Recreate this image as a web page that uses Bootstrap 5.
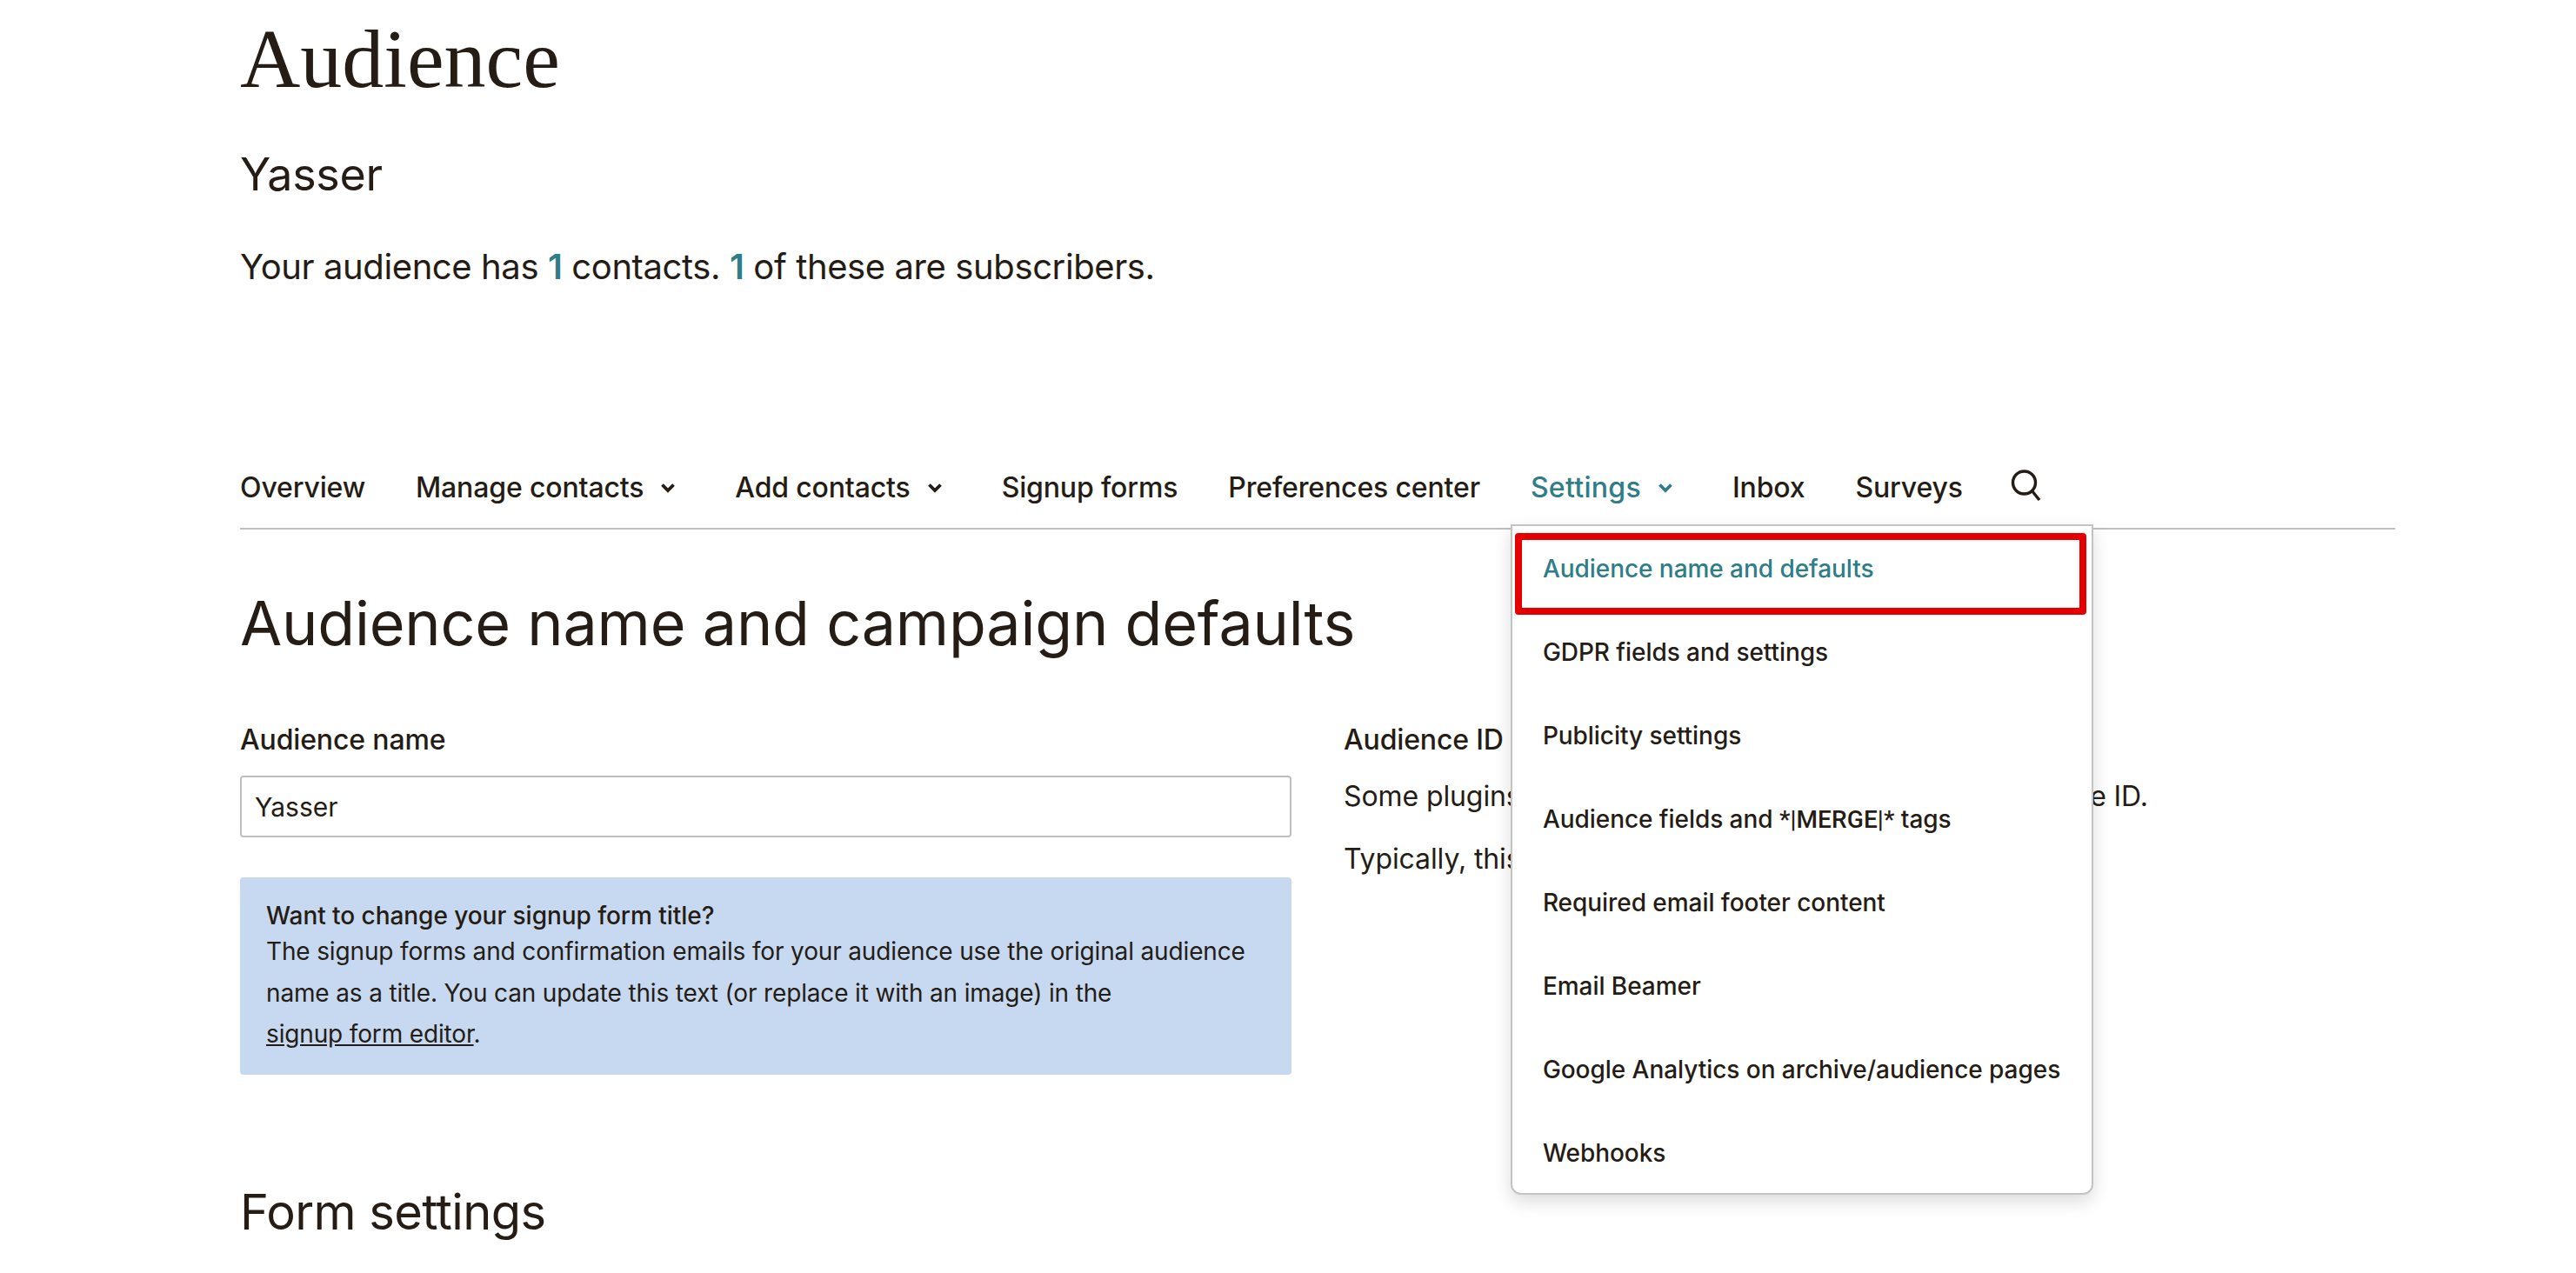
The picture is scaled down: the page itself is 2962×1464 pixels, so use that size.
<!DOCTYPE html>
<html lang="en">
<head>
<meta charset="utf-8">
<title>Audience</title>
<link href="https://cdn.jsdelivr.net/npm/bootstrap@5.3.0/dist/css/bootstrap.min.css" rel="stylesheet">
<style>
html,body{height:1464px;overflow:hidden}
body{font-family:Inter,"Liberation Sans",sans-serif;color:#241c15;background:#fff;font-size:32px}
.page-wrap{padding:0 208px 0 276px}
.aud-title{font-family:"Liberation Serif",serif;font-size:96px;line-height:1;font-weight:400;margin:20px 0 0;height:96px}
.aud-name{font-size:52px;line-height:60px;font-weight:400;margin:55px 0 0;letter-spacing:-.3px}
.aud-summary{font-size:40px;line-height:50px;font-weight:400;margin:51px 0 0;letter-spacing:-.4px}
.teal-num{color:#2e7d88;font-weight:600}
.tabbar{margin-top:208px;height:69px;padding-top:2px;border-bottom:2px solid #bfbfbf;gap:58px;align-items:flex-start;font-weight:500;font-size:32px;line-height:38px;letter-spacing:-.15px}
.tab-link{color:#241c15;text-decoration:none;display:flex;align-items:center;gap:19px}
.tab-link.on{color:#2e7d88;letter-spacing:.3px}
.tab-wrap{position:relative}
.chev{width:18px;height:12px;margin-right:10px;fill:none;stroke:currentColor;stroke-width:3.8}
.lens-link{margin:-2px 0 0 -3px}
.lens{width:36px;height:36px;fill:none;stroke:#241c15;stroke-width:3.4}
.settings-menu{display:block;position:absolute;top:61px;left:-23px;width:670px;height:771px;padding:8px 3px;margin:0;border:2px solid #c4c4c4;border-radius:0 0 12px 12px;box-shadow:0 8px 20px rgba(0,0,0,.14);z-index:5;font-size:28px;letter-spacing:-.05px}
.settings-menu .dropdown-item{padding:23px 0 0 32px;height:96px;line-height:40px;color:#241c15;font-weight:500;white-space:nowrap;background:none}
.settings-menu .dropdown-item.cur{color:#2e7d88;height:94px;width:657px;padding:13px 0 0 24px;border:8px solid #e40000;border-radius:4px}
.merge-tag{font-family:Roboto,sans-serif;letter-spacing:.1px}
.main-head{font-size:70px;line-height:84px;font-weight:400;margin:66px 0 0;letter-spacing:-.2px}
.split{display:grid;grid-template-columns:1209px 1fr;gap:60px;margin-top:72px}
.field-lab{font-size:32px;line-height:40px;font-weight:500;margin:0 0 21px;display:block;letter-spacing:-.15px}
.side-lab{margin-bottom:25px}
.name-box{height:71px;border:2px solid #bfbfbf;border-radius:4px;font-size:30px;font-weight:400;padding:0 15px;color:#241c15}
.name-box:focus{border-color:#bfbfbf;box-shadow:none}
.info-box{background:#c7d9f0;border-radius:4px;margin-top:46px;height:227px;padding:26px 30px;font-size:28px;font-weight:400;line-height:47.5px;border:0;color:#241c15;margin-bottom:0;letter-spacing:-.15px}
.info-box strong{display:block;font-weight:500;line-height:36px;letter-spacing:-.05px}
.info-box a{color:#241c15}
.side-text{font-size:32px;font-weight:400;line-height:40px;margin:0 0 32px;letter-spacing:-.1px}
.sub-head{font-size:56px;line-height:68px;font-weight:400;margin:124px 0 0;letter-spacing:-.6px}
</style>
</head>
<body>
<div class="page-wrap">
  <h1 class="aud-title">Audience</h1>
  <h2 class="aud-name">Yasser</h2>
  <p class="aud-summary">Your audience has <span class="teal-num">1</span> contacts. <span class="teal-num">1</span> of these are subscribers.</p>

  <nav class="d-flex tabbar">
    <a class="tab-link" href="#">Overview</a>
    <a class="tab-link" href="#">Manage contacts <svg class="chev" viewBox="0 0 18 12"><path d="M2.5 2.5L9 9l6.5-6.5"/></svg></a>
    <a class="tab-link" href="#">Add contacts <svg class="chev" viewBox="0 0 18 12"><path d="M2.5 2.5L9 9l6.5-6.5"/></svg></a>
    <a class="tab-link" href="#">Signup forms</a>
    <a class="tab-link" href="#">Preferences center</a>
    <div class="tab-wrap">
      <a class="tab-link on" href="#">Settings <svg class="chev" viewBox="0 0 18 12"><path d="M2.5 2.5L9 9l6.5-6.5"/></svg></a>
      <div class="dropdown-menu settings-menu">
        <a class="dropdown-item cur" href="#">Audience name and defaults</a>
        <a class="dropdown-item" href="#">GDPR fields and settings</a>
        <a class="dropdown-item" href="#">Publicity settings</a>
        <a class="dropdown-item" href="#">Audience fields and <span class="merge-tag">*|MERGE|*</span> tags</a>
        <a class="dropdown-item" href="#">Required email footer content</a>
        <a class="dropdown-item" href="#">Email Beamer</a>
        <a class="dropdown-item" href="#">Google Analytics on archive/audience pages</a>
        <a class="dropdown-item" href="#">Webhooks</a>
      </div>
    </div>
    <a class="tab-link" href="#">Inbox</a>
    <a class="tab-link" href="#">Surveys</a>
    <a class="tab-link lens-link" href="#" aria-label="Search"><svg class="lens" viewBox="0 0 36 36"><circle cx="15.5" cy="15" r="13"/><path d="M24.5 24.5L33 35"/></svg></a>
  </nav>

  <h2 class="main-head">Audience name and campaign defaults</h2>

  <div class="split">
    <div>
      <label class="field-lab" for="aud">Audience name</label>
      <input id="aud" class="form-control name-box" value="Yasser">
      <div class="alert info-box"><strong>Want to change your signup form title?</strong>The signup forms and confirmation emails for your audience use the original audience name as a title. You can update this text (or replace it with an image) in the <br><a href="#">signup form editor</a>.</div>
    </div>
    <div>
      <div class="field-lab side-lab">Audience ID</div>
      <p class="side-text">Some plugins and integrations may request your Audience ID.</p>
      <p class="side-text">Typically, this is what they want: 1a2b3c4d5e</p>
    </div>
  </div>

  <h3 class="sub-head">Form settings</h3>
</div>
<script src="https://cdn.jsdelivr.net/npm/bootstrap@5.3.0/dist/js/bootstrap.bundle.min.js"></script>
</body>
</html>
